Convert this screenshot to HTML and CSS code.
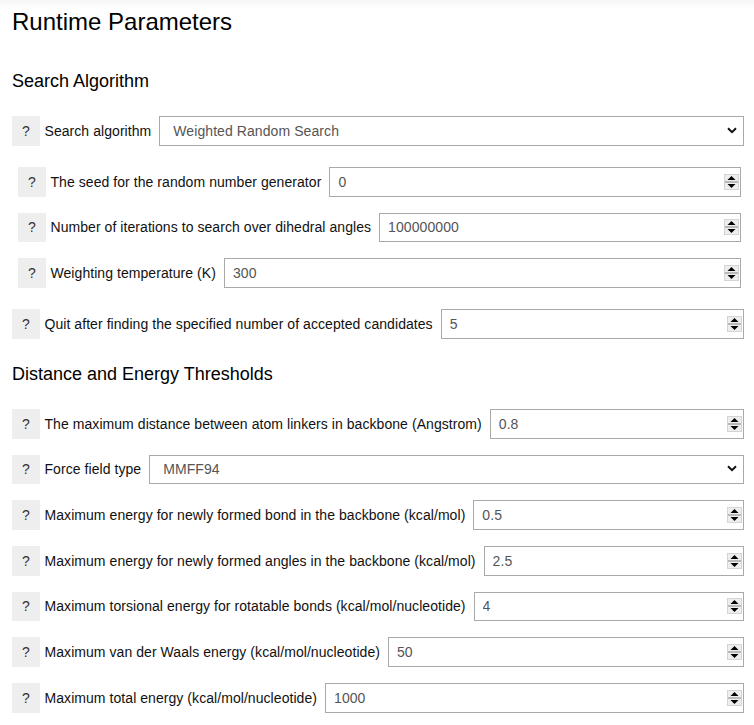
FILE: index.html
```html
<!DOCTYPE html>
<html lang="en">
<head>
<meta charset="utf-8">
<title>Runtime Parameters</title>
<link rel="stylesheet" href="styles.css">
</head>
<body>
<main class="page">
  <h1 class="title">Runtime Parameters</h1>

  <section class="group">
    <h2 class="group-title">Search Algorithm</h2>

    <div class="field">
      <span class="help">?</span>
      <label class="field-label">Search algorithm</label>
      <div class="box">
        <select class="control control-select">
          <option>Weighted Random Search</option>
        </select>
        <svg class="chevron" viewBox="0 0 10 7" width="10" height="7"><path d="M1 1.2L5 5.2L9 1.2" fill="none" stroke="#111" stroke-width="2"/></svg>
      </div>
    </div>

    <div class="sub">
      <div class="field">
        <span class="help">?</span>
        <label class="field-label">The seed for the random number generator</label>
        <div class="box">
          <input class="control" type="number" value="0">
          <svg class="spin" viewBox="0 0 15 16" width="15" height="16"><rect x="0.5" y="0.5" width="14" height="15" fill="#eeeeee" stroke="#d4d4d4"/><rect x="1" y="7" width="13" height="2" fill="#b9b9b9"/><path d="M3.5 6L7.5 2L11.5 6Z" fill="#000"/><path d="M3.5 10L7.5 14L11.5 10Z" fill="#000"/></svg>
        </div>
      </div>
      <div class="field">
        <span class="help">?</span>
        <label class="field-label">Number of iterations to search over dihedral angles</label>
        <div class="box">
          <input class="control" type="number" value="100000000">
          <svg class="spin" viewBox="0 0 15 16" width="15" height="16"><rect x="0.5" y="0.5" width="14" height="15" fill="#eeeeee" stroke="#d4d4d4"/><rect x="1" y="7" width="13" height="2" fill="#b9b9b9"/><path d="M3.5 6L7.5 2L11.5 6Z" fill="#000"/><path d="M3.5 10L7.5 14L11.5 10Z" fill="#000"/></svg>
        </div>
      </div>
      <div class="field">
        <span class="help">?</span>
        <label class="field-label">Weighting temperature (K)</label>
        <div class="box">
          <input class="control" type="number" value="300">
          <svg class="spin" viewBox="0 0 15 16" width="15" height="16"><rect x="0.5" y="0.5" width="14" height="15" fill="#eeeeee" stroke="#d4d4d4"/><rect x="1" y="7" width="13" height="2" fill="#b9b9b9"/><path d="M3.5 6L7.5 2L11.5 6Z" fill="#000"/><path d="M3.5 10L7.5 14L11.5 10Z" fill="#000"/></svg>
        </div>
      </div>
    </div>

    <div class="field">
      <span class="help">?</span>
      <label class="field-label">Quit after finding the specified number of accepted candidates</label>
      <div class="box">
        <input class="control" type="number" value="5">
        <svg class="spin" viewBox="0 0 15 16" width="15" height="16"><rect x="0.5" y="0.5" width="14" height="15" fill="#eeeeee" stroke="#d4d4d4"/><rect x="1" y="7" width="13" height="2" fill="#b9b9b9"/><path d="M3.5 6L7.5 2L11.5 6Z" fill="#000"/><path d="M3.5 10L7.5 14L11.5 10Z" fill="#000"/></svg>
      </div>
    </div>
  </section>

  <section class="group">
    <h2 class="group-title">Distance and Energy Thresholds</h2>

    <div class="field">
      <span class="help">?</span>
      <label class="field-label">The maximum distance between atom linkers in backbone (Angstrom)</label>
      <div class="box">
        <input class="control" type="number" value="0.8">
        <svg class="spin" viewBox="0 0 15 16" width="15" height="16"><rect x="0.5" y="0.5" width="14" height="15" fill="#eeeeee" stroke="#d4d4d4"/><rect x="1" y="7" width="13" height="2" fill="#b9b9b9"/><path d="M3.5 6L7.5 2L11.5 6Z" fill="#000"/><path d="M3.5 10L7.5 14L11.5 10Z" fill="#000"/></svg>
      </div>
    </div>

    <div class="field">
      <span class="help">?</span>
      <label class="field-label">Force field type</label>
      <div class="box">
        <select class="control control-select">
          <option>MMFF94</option>
        </select>
        <svg class="chevron" viewBox="0 0 10 7" width="10" height="7"><path d="M1 1.2L5 5.2L9 1.2" fill="none" stroke="#111" stroke-width="2"/></svg>
      </div>
    </div>

    <div class="field">
      <span class="help">?</span>
      <label class="field-label">Maximum energy for newly formed bond in the backbone (kcal/mol)</label>
      <div class="box">
        <input class="control" type="number" value="0.5">
        <svg class="spin" viewBox="0 0 15 16" width="15" height="16"><rect x="0.5" y="0.5" width="14" height="15" fill="#eeeeee" stroke="#d4d4d4"/><rect x="1" y="7" width="13" height="2" fill="#b9b9b9"/><path d="M3.5 6L7.5 2L11.5 6Z" fill="#000"/><path d="M3.5 10L7.5 14L11.5 10Z" fill="#000"/></svg>
      </div>
    </div>

    <div class="field">
      <span class="help">?</span>
      <label class="field-label">Maximum energy for newly formed angles in the backbone (kcal/mol)</label>
      <div class="box">
        <input class="control" type="number" value="2.5">
        <svg class="spin" viewBox="0 0 15 16" width="15" height="16"><rect x="0.5" y="0.5" width="14" height="15" fill="#eeeeee" stroke="#d4d4d4"/><rect x="1" y="7" width="13" height="2" fill="#b9b9b9"/><path d="M3.5 6L7.5 2L11.5 6Z" fill="#000"/><path d="M3.5 10L7.5 14L11.5 10Z" fill="#000"/></svg>
      </div>
    </div>

    <div class="field">
      <span class="help">?</span>
      <label class="field-label">Maximum torsional energy for rotatable bonds (kcal/mol/nucleotide)</label>
      <div class="box">
        <input class="control" type="number" value="4">
        <svg class="spin" viewBox="0 0 15 16" width="15" height="16"><rect x="0.5" y="0.5" width="14" height="15" fill="#eeeeee" stroke="#d4d4d4"/><rect x="1" y="7" width="13" height="2" fill="#b9b9b9"/><path d="M3.5 6L7.5 2L11.5 6Z" fill="#000"/><path d="M3.5 10L7.5 14L11.5 10Z" fill="#000"/></svg>
      </div>
    </div>

    <div class="field">
      <span class="help">?</span>
      <label class="field-label">Maximum van der Waals energy (kcal/mol/nucleotide)</label>
      <div class="box">
        <input class="control" type="number" value="50">
        <svg class="spin" viewBox="0 0 15 16" width="15" height="16"><rect x="0.5" y="0.5" width="14" height="15" fill="#eeeeee" stroke="#d4d4d4"/><rect x="1" y="7" width="13" height="2" fill="#b9b9b9"/><path d="M3.5 6L7.5 2L11.5 6Z" fill="#000"/><path d="M3.5 10L7.5 14L11.5 10Z" fill="#000"/></svg>
      </div>
    </div>

    <div class="field">
      <span class="help">?</span>
      <label class="field-label">Maximum total energy (kcal/mol/nucleotide)</label>
      <div class="box">
        <input class="control" type="number" value="1000">
        <svg class="spin" viewBox="0 0 15 16" width="15" height="16"><rect x="0.5" y="0.5" width="14" height="15" fill="#eeeeee" stroke="#d4d4d4"/><rect x="1" y="7" width="13" height="2" fill="#b9b9b9"/><path d="M3.5 6L7.5 2L11.5 6Z" fill="#000"/><path d="M3.5 10L7.5 14L11.5 10Z" fill="#000"/></svg>
      </div>
    </div>
  </section>
</main>
</body>
</html>
```

FILE: styles.css
```css
html, body {
  margin: 0;
  padding: 0;
}

body {
  background: linear-gradient(#f6f6f6 0, #ffffff 9px) no-repeat #ffffff;
  font-family: "Liberation Sans", Arial, sans-serif;
  color: #111;
}

.page {
  padding: 8px 10px 0 12px;
}

.title {
  margin: 0;
  font-size: 24px;
  line-height: 28px;
  font-weight: normal;
  color: #000;
}

.group-title {
  margin: 0 0 24px;
  font-size: 18px;
  line-height: 22px;
  font-weight: normal;
  color: #000;
}

.group:first-of-type {
  margin-top: 34px;
}

.group + .group {
  margin-top: 24px;
}

.field {
  display: flex;
  align-items: center;
  height: 29.67px;
  margin-bottom: 16px;
}

.help {
  flex: 0 0 28px;
  align-self: stretch;
  display: flex;
  align-items: center;
  justify-content: center;
  background: #eeeeee;
  color: #333;
  font-size: 14px;
}

.field-label {
  margin: 0 8px 0 4.5px;
  font-size: 14px;
  color: #111;
  white-space: nowrap;
  letter-spacing: 0.06px;
}

.box {
  flex: 1;
  min-width: 0;
  align-self: stretch;
  display: flex;
  align-items: center;
  border: 1px solid #a9a9a9;
  background: #fff;
}

.control {
  flex: 1;
  min-width: 0;
  height: 100%;
  margin: 0;
  border: 0;
  outline: none;
  background: transparent;
  font-family: "Liberation Sans", Arial, sans-serif;
  font-size: 14px;
  letter-spacing: 0.08px;
  color: #555;
  padding: 0 0 0 8px;
  -moz-appearance: textfield;
}

.control::-webkit-inner-spin-button,
.control::-webkit-outer-spin-button {
  -webkit-appearance: none;
  margin: 0;
}

.control-select {
  -webkit-appearance: none;
  appearance: none;
  padding-left: 13px;
}

.chevron {
  flex: 0 0 10px;
  margin: 0 6px 1px 0;
}

.spin {
  flex: 0 0 15px;
  margin-right: 1px;
}

.sub {
  padding: 5.33px 3px 5.33px 6px;
}
```
